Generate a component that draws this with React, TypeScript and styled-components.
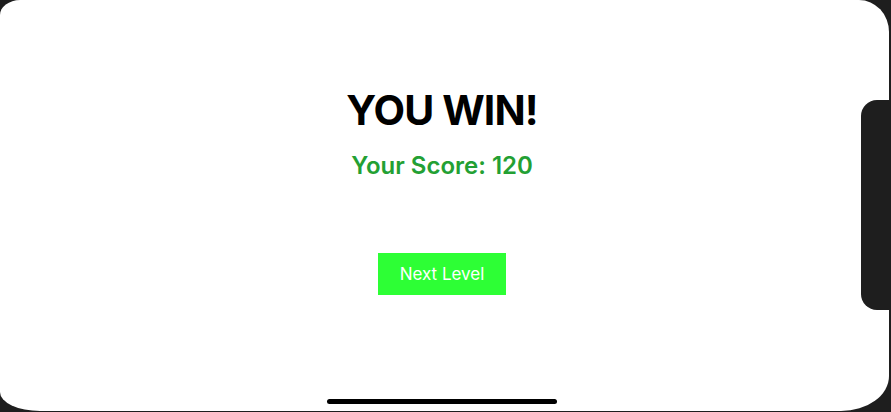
import React from "react";
import styled, { createGlobalStyle } from "styled-components";

const Global = createGlobalStyle`
  html, body { margin: 0; padding: 0; background: #1e1e1e; }
  body { width: 891px; height: 412px; overflow: hidden; }
  #root { width: 891px; height: 412px; }
`;

const Frame = styled.div`
  position: relative;
  width: 891px;
  height: 412px;
  background: #1e1e1e;
  display: flex;
`;

const Display = styled.div`
  width: 889px;
  height: 411px;
  background: #ffffff;
  border-radius: 20px 30px 48px 40px / 15px 32px 35px 19px;
  display: flex;
  flex-direction: column;
  align-items: center;
  padding-right: 5px;
  box-sizing: border-box;
  font-family: Inter, "Noto Sans", sans-serif;
`;

const Notch = styled.div`
  position: absolute;
  right: 0;
  top: 100px;
  width: 30px;
  height: 210px;
  background: #1e1e1e;
  border-radius: 16px 0 0 16px;
`;

const Title = styled.h1`
  margin: 86px 0 0;
  font-size: 41px;
  line-height: 48px;
  font-weight: 700;
  color: #000;
  letter-spacing: -0.9px;
`;

const Score = styled.div`
  margin-top: 18px;
  font-size: 24px;
  line-height: 28px;
  font-weight: 600;
  color: #23a033;
`;

const NextButton = styled.button`
  margin-top: 73px;
  width: 128px;
  height: 42px;
  border: none;
  background: #2dff35;
  color: #fff;
  font-family: Inter, "Noto Sans", sans-serif;
  font-size: 17px;
  font-weight: 400;
  padding: 0;
  cursor: pointer;
`;

const HomeBar = styled.div`
  position: absolute;
  left: 327px;
  top: 399px;
  width: 230px;
  height: 5px;
  border-radius: 3px;
  background: #000;
`;

export default function App() {
  return (
    <>
      <Global />
      <Frame>
        <Display>
          <Title>YOU WIN!</Title>
          <Score>Your Score: 120</Score>
          <NextButton>Next Level</NextButton>
        </Display>
        <Notch />
        <HomeBar />
      </Frame>
    </>
  );
}
